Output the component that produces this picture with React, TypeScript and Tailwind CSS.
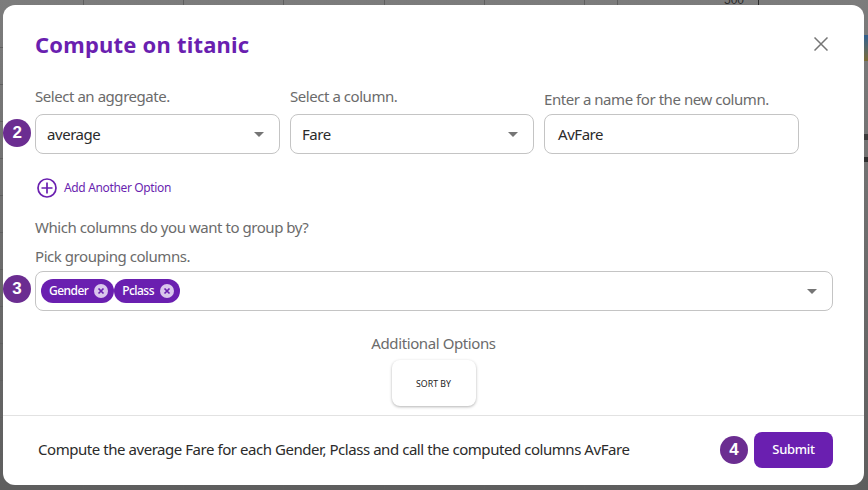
import React from "react";

const font = { fontFamily: '"Noto Sans", sans-serif' };

const vLines = [83, 183, 283, 384, 484, 584, 617];
const hLines = [47, 84, 121, 158, 195, 232, 269, 306, 343, 380, 417, 454];

function Step({ n }: { n: number }) {
  return (
    <div className="absolute z-10 flex h-[28px] w-[28px] items-center justify-center rounded-full bg-[#6b2d91] text-[17px] font-bold text-white [font-family:'Liberation_Sans',sans-serif]">
      {n}
    </div>
  );
}

function Caret() {
  return (
    <svg width="10" height="5" viewBox="0 0 10 5" className="shrink-0">
      <path d="M0 0 H10 L5 5 Z" fill="#757575" />
    </svg>
  );
}

function Chip({ label }: { label: string }) {
  return (
    <div className="flex h-[24px] items-center rounded-full bg-[#6a1fb0] pl-[8px] pr-[6px] text-[12px] font-medium text-white">
      <span className="tracking-[-0.55px]">{label}</span>
      <svg width="14" height="14" viewBox="0 0 14 14" className="ml-[6px]">
        <circle cx="7" cy="7" r="7" fill="#d9c6ec" />
        <path d="M4.5 4.5 L9.5 9.5 M9.5 4.5 L4.5 9.5" stroke="#6a1fb0" strokeWidth="1.7" />
      </svg>
    </div>
  );
}

function SelectBox({ value, w }: { value: string; w: string }) {
  return (
    <div className={`flex h-[40px] items-center justify-between rounded-[8px] border border-[#c4c4c4] bg-white pl-[11px] pr-[15px] text-[15px] tracking-[-0.45px] text-[#2b2b2b] ${w}`}>
      <span>{value}</span>
      <Caret />
    </div>
  );
}

export default function App() {
  return (
    <div className="relative h-[490px] w-[868px] overflow-hidden bg-gradient-to-b from-[#7c7c7c] to-[#5e5e5e]" style={font}>
      {vLines.map((x) => (
        <div key={x} className="absolute top-0 h-full w-px bg-[#5f5f5f]" style={{ left: x }} />
      ))}
      {hLines.map((y) => (
        <div key={y} className="absolute left-0 h-px w-[3px] bg-[#5f5f5f]" style={{ top: y }} />
      ))}
      <div className="absolute left-[724px] top-[-7px] text-[12px] leading-[14px] text-[#2c2c2c] [font-family:'Liberation_Sans',sans-serif]">500</div>
      <div className="absolute left-[758px] top-0 h-[5px] w-px bg-[#2c2c2c]" />
      <div className="absolute left-[864px] top-[35px] h-[26px] w-[4px] bg-gradient-to-b from-[#2f5f8f] to-[#7a6a30]" />
      <div className="absolute left-[864px] top-[134px] h-[6px] w-[4px] bg-[#3c3c3c]" />
      <div className="absolute left-[864px] top-[157px] h-[5px] w-[4px] bg-[#2f2f2f]" />

      <div className="absolute left-[3px] top-[5px] flex h-[480px] w-[861px] flex-col rounded-[12px] bg-white">
        <div className="flex items-center justify-between pl-[32px] pr-[36px] pt-[23px]">
          <h1 className="text-[22px] font-bold leading-[32px] tracking-[0.2px] text-[#6a1fb0]">Compute on titanic</h1>
          <svg width="14" height="14" viewBox="0 0 14 14">
            <path d="M0.5 0.5 L13.5 13.5 M13.5 0.5 L0.5 13.5" stroke="#757575" strokeWidth="1.5" />
          </svg>
        </div>

        <div className="relative mt-[26px] flex items-end gap-[10px] pl-[32px] text-[15px] tracking-[-0.45px] text-[#6b6b6b]">
          <div className="absolute left-0 top-[33px]"><Step n={2} /></div>
          <div className="flex w-[245px] flex-col">
            <span className="mb-[8px] leading-[20px]">Select an aggregate.</span>
            <SelectBox value="average" w="w-[245px]" />
          </div>
          <div className="flex w-[244px] flex-col">
            <span className="mb-[8px] leading-[20px]">Select a column.</span>
            <SelectBox value="Fare" w="w-[244px]" />
          </div>
          <div className="flex w-[255px] flex-col">
            <span className="mb-[5px] leading-[20px]">Enter a name for the new column.</span>
            <div className="flex h-[40px] items-center rounded-[8px] border border-[#c4c4c4] pl-[13px] text-[#2b2b2b]">AvFare</div>
          </div>
        </div>

        <div className="mt-[24px] flex items-center pl-[34px]">
          <svg width="20" height="20" viewBox="0 0 20 20">
            <circle cx="10" cy="10" r="9" fill="none" stroke="#6a1fb0" strokeWidth="1.7" />
            <path d="M10 4.5 V15.5 M4.5 10 H15.5" stroke="#6a1fb0" strokeWidth="1.7" />
          </svg>
          <span className="ml-[7px] text-[12px] tracking-[-0.35px] text-[#6a1fb0]">Add Another Option</span>
        </div>

        <div className="mt-[19px] pl-[32px] text-[15px] leading-[20px] tracking-[-0.45px] text-[#6b6b6b]">Which columns do you want to group by?</div>
        <div className="mt-[9px] pl-[32px] text-[15px] leading-[20px] tracking-[-0.45px] text-[#6b6b6b]">Pick grouping columns.</div>

        <div className="relative ml-[32px] mr-[31px] mt-[5px]">
          <div className="absolute left-[-32px] top-[4px]"><Step n={3} /></div>
          <div className="flex h-[40px] items-center justify-between rounded-[8px] border border-[#c4c4c4] pl-[5px] pr-[15px]">
            <div className="flex items-center">
              <Chip label="Gender" />
              <Chip label="Pclass" />
            </div>
            <Caret />
          </div>
        </div>

        <div className="mt-[22px] text-center text-[15px] leading-[20px] tracking-[-0.4px] text-[#6b6b6b]">Additional Options</div>
        <div className="mt-[7px] flex justify-center">
          <div className="flex h-[46px] w-[84px] items-center justify-center rounded-[8px] bg-white pt-[3px] text-[8.75px] text-[#222] shadow-[0_1px_3px_rgba(0,0,0,0.3)]">SORT BY</div>
        </div>

        <div className="mt-[9px] flex flex-1 items-center justify-between border-t border-[#e2e2e2] pb-[2px] pl-[35px] pr-[31px]">
          <span className="text-[15px] tracking-[-0.45px] text-[#2b2b2b]">Compute the average Fare for each Gender, Pclass and call the computed columns AvFare</span>
          <div className="relative">
            <div className="absolute left-[-34px] top-[4px]"><Step n={4} /></div>
            <div className="flex h-[36px] w-[79px] items-center justify-center rounded-[8px] bg-[#6a1fb0] text-[13px] font-medium tracking-[-0.3px] text-white">Submit</div>
          </div>
        </div>
      </div>
    </div>
  );
}
